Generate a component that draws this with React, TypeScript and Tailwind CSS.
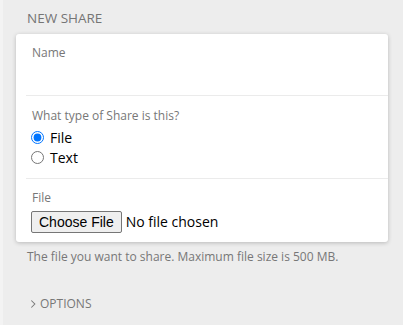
import { useState } from 'react'

export default function App() {
  const [kind, setKind] = useState<'file' | 'text'>('file')

  return (
    <div className="min-h-[325px] bg-[#ededed] border-l-[3px] border-[#f3f3f3] pl-[13px] pr-[15px] pt-[9px] font-['Open_Sans',sans-serif]">
      <h2 className="pl-[11px] text-[13.5px] leading-[18px] text-[#757575] uppercase">New Share</h2>

      <div className="mt-[7px] rounded-[3px] bg-white shadow-[0_1px_4px_rgba(0,0,0,0.22)]">
        <div className="ml-[10px] border-b border-[#ebebeb] pl-[6px] pt-[11px]">
          <label className="block text-[12px] leading-[16px] text-[#777]">Name</label>
          <input type="text" className="block h-[34px] w-full bg-transparent text-[14px] outline-none" />
        </div>

        <div className="ml-[10px] border-b border-[#ebebeb] pl-[6px] pt-[12px] pb-[11px]">
          <div className="text-[12px] leading-[16px] text-[#777]">What type of Share is this?</div>
          <div className="mt-[3px] flex flex-col">
            <label className="flex h-[20px] items-center gap-[6px] text-[14px] text-black">
              <input
                type="radio"
                name="kind"
                checked={kind === 'file'}
                onChange={() => setKind('file')}
                className="ml-[-1px] h-[13px] w-[13px] accent-[#0075ff]"
              />
              File
            </label>
            <label className="flex h-[20px] items-center gap-[6px] text-[14px] text-black">
              <input
                type="radio"
                name="kind"
                checked={kind === 'text'}
                onChange={() => setKind('text')}
                className="ml-[-1px] h-[13px] w-[13px] accent-[#0075ff]"
              />
              Text
            </label>
          </div>
        </div>

        <div className="ml-[10px] pl-[6px] pt-[11px] pb-[9px]">
          <div className="text-[12px] leading-[16px] text-[#777]">File</div>
          <input
            type="file"
            className="mt-[5px] ml-[-1px] block text-[14px] text-black file:mr-[4px] file:h-[22px] file:rounded-[2px] file:border file:border-[#767676] file:bg-[#efefef] file:px-[7px] file:font-['Liberation_Sans',sans-serif] file:text-[14px] file:text-black"
          />
        </div>
      </div>

      <p className="mt-[7px] pl-[11px] text-[12px] leading-[16px] text-[#777]">
        The file you want to share. Maximum file size is 500 MB.
      </p>

      <button className="mt-[31px] ml-[14px] flex items-center gap-[3px] text-[12px] leading-[16px] text-[#777] uppercase">
        <svg viewBox="0 0 8 10" className="h-[10px] w-[7px]" fill="none" stroke="currentColor" strokeWidth="1.2">
          <path d="M1.5 1l4 4-4 4" />
        </svg>
        Options
      </button>
    </div>
  )
}
